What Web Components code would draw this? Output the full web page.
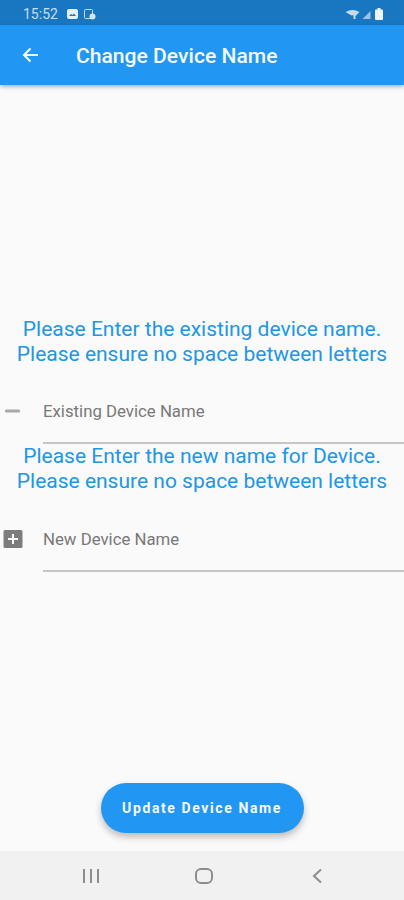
<!DOCTYPE html>
<html>
<head>
<meta charset="utf-8">
<style>
html, body { margin: 0; padding: 0; height: 100%; }
body { background: #fafafa; font-family: Roboto, "Liberation Sans", sans-serif; }
</style>
</head>
<body>
<device-page>
  <status-bar slot="top" time="15:52"></status-bar>
  <app-bar slot="top" title="Change Device Name"></app-bar>
  <hint-text style="margin-top:232px">Please Enter the existing device name.<br>Please ensure no space between letters</hint-text>
  <name-field label="Existing Device Name" icon="minus" style="margin-top:34px"></name-field>
  <hint-text>Please Enter the new name for Device.<br>Please ensure no space between letters</hint-text>
  <name-field label="New Device Name" icon="plus" style="margin-top:35px"></name-field>
  <update-button slot="bottom">Update Device Name</update-button>
  <nav-bar slot="bottom"></nav-bar>
</device-page>

<script>
class DevicePage extends HTMLElement {
    constructor() {
        super();
        this.shadowDOM = this.attachShadow({mode : "open"});
    }
    connectedCallback() {
        this.shadowDOM.innerHTML = `
        <style>
            :host { display: flex; flex-direction: column; height: 900px; overflow: hidden; }
            main { flex: 1; display: flex; flex-direction: column; }
        </style>
        <slot name="top"></slot>
        <main><slot></slot></main>
        <slot name="bottom"></slot>`;
    }
}

class StatusBar extends HTMLElement {
    constructor() {
        super();
        this.shadowDOM = this.attachShadow({mode : "open"});
    }
    connectedCallback() {
        this.shadowDOM.innerHTML = `
        <style>
            :host { display: flex; align-items: center; height: 25px; padding: 3px 21px 0 23px; box-sizing: border-box; background: #1976c0; color: #c9deef; font-size: 14px; }
            span { margin-right: 3px; }
            svg { display: block; }
            .left { display: flex; align-items: center; gap: 6px; flex: 1; }
            .right { display: flex; align-items: center; gap: 2px; }
        </style>
        <div class="left">
            <span>${this.getAttribute("time")}</span>
            <svg width="11" height="10" viewBox="0 0 11 10"><rect width="11" height="10" rx="2" fill="#e6f0f8"/><path d="M2 7l2-2 1.500 1L7 4.500 9 7z" fill="#1976c0"/></svg>
            <svg width="12" height="11" viewBox="0 0 12 11"><rect x=".5" y=".5" width="8" height="9" rx="1" fill="none" stroke="#c4dbee"/><circle cx="8.500" cy="7.500" r="3" fill="#d3e4f2"/></svg>
        </div>
        <div class="right">
            <svg width="15" height="9" viewBox="0 0 14 9"><path d="M0 2Q7-2 14 2L10 6V9H8V5.500Q7 5 6 5.500z" fill="#c4dbee"/></svg>
            <svg width="9" height="9" viewBox="0 0 8 9"><path d="M0 9L8 1V9z" fill="#9cc2e0"/></svg>
            <svg width="8" height="12" viewBox="0 0 8 12" style="margin-left:2px"><path d="M2.500 0h3v1.500H7a1 1 0 0 1 1 1V11a1 1 0 0 1-1 1H1a1 1 0 0 1-1-1V2.500a1 1 0 0 1 1-1h1.500z" fill="#eef5fa"/></svg>
        </div>`;
    }
}

class AppBar extends HTMLElement {
    constructor() {
        super();
        this.shadowDOM = this.attachShadow({mode : "open"});
    }
    connectedCallback() {
        this.shadowDOM.innerHTML = `
        <style>
            :host { display: flex; align-items: center; height: 60px; background: #2196f3; color: #f4faff; box-shadow: 0 2px 4px rgba(0,0,0,.28); position: relative; }
            svg { margin-left: 21px; display: block; }
            h1 { margin: 0 0 0 37px; font-size: 21.100px; font-weight: 500; }
        </style>
        <svg width="18" height="18" viewBox="0 0 18 18"><path d="M17 9H3M9.500 2.500L3 9l6.500 6.500" fill="none" stroke="#f4faff" stroke-width="2.100"/></svg>
        <h1>${this.getAttribute("title")}</h1>`;
    }
}

class HintText extends HTMLElement {
    constructor() {
        super();
        this.shadowDOM = this.attachShadow({mode : "open"});
    }
    connectedCallback() {
        this.shadowDOM.innerHTML = `
        <style>
            :host { display: block; color: #2196e3; font-size: 21px; line-height: 25px; text-align: center; }
        </style>
        <slot></slot>`;
    }
}

class NameField extends HTMLElement {
    constructor() {
        super();
        this.shadowDOM = this.attachShadow({mode : "open"});
    }
    connectedCallback() {
        const icons = {
            minus: `<svg width="16" height="16" viewBox="0 0 16 16"><rect x="0" y="6.500" width="15" height="3" rx="1" fill="#a8a8a8"/></svg>`,
            plus: `<svg width="20" height="20" viewBox="0 0 20 20"><path d="M2 1h16a1.500 1.500 0 0 1 1.500 1.500v15A1.500 1.500 0 0 1 18 19H2A1.500 1.500 0 0 1 .5 17.500v-15A1.500 1.500 0 0 1 2 1zM9 5v4H5v2h4v4h2v-4h4V9h-4V5z" fill="#7d7d7d" fill-rule="evenodd"/></svg>`
        };
        this.shadowDOM.innerHTML = `
        <style>
            :host { display: flex; align-items: flex-start; height: 43px; }
            .icon { width: 43px; padding-left: 5px; box-sizing: border-box; height: 20px; display: flex; align-items: center; }
            .plus { padding-left: 3px; }
            .box { flex: 1; height: 41px; border-bottom: 2px solid #c6c6c6; color: #787878; font-size: 16.800px; line-height: 20px; }
            svg { display: block; }
        </style>
        <div class="icon ${this.getAttribute("icon")}">${icons[this.getAttribute("icon")]}</div>
        <div class="box">${this.getAttribute("label")}</div>`;
    }
}

class UpdateButton extends HTMLElement {
    constructor() {
        super();
        this.shadowDOM = this.attachShadow({mode : "open"});
    }
    connectedCallback() {
        this.shadowDOM.innerHTML = `
        <style>
            :host { display: flex; justify-content: center; padding-bottom: 18px; }
            button { width: 203px; height: 50px; border: 0; border-radius: 25px; background: #2196f3; color: #f4faff; font: 700 14px Roboto, sans-serif; letter-spacing: 1.600px; box-shadow: 0 4px 7px rgba(0,0,0,.25); padding: 0; }
        </style>
        <button><slot></slot></button>`;
    }
}

class NavBar extends HTMLElement {
    constructor() {
        super();
        this.shadowDOM = this.attachShadow({mode : "open"});
    }
    connectedCallback() {
        this.shadowDOM.innerHTML = `
        <style>
            :host { display: grid; grid-template-columns: repeat(3, 113px); justify-content: center; justify-items: center; align-items: center; height: 49px; padding-left: 4px; background: #f1f1f1; }
            svg { display: block; }
        </style>
        <svg width="18" height="16" viewBox="0 0 18 16"><path d="M2 1v14M9 1v14M16 1v14" stroke="#8d8d8d" stroke-width="2"/></svg>
        <svg width="18" height="16" viewBox="0 0 18 16"><rect x="1" y="1" width="16" height="14" rx="5" fill="none" stroke="#8d8d8d" stroke-width="2"/></svg>
        <svg width="12" height="16" viewBox="0 0 12 16"><path d="M10 1.500L3 8l7 6.500" fill="none" stroke="#8d8d8d" stroke-width="2"/></svg>`;
    }
}

customElements.define("device-page", DevicePage);
customElements.define("status-bar", StatusBar);
customElements.define("app-bar", AppBar);
customElements.define("hint-text", HintText);
customElements.define("name-field", NameField);
customElements.define("update-button", UpdateButton);
customElements.define("nav-bar", NavBar);
</script>
</body>
</html>
